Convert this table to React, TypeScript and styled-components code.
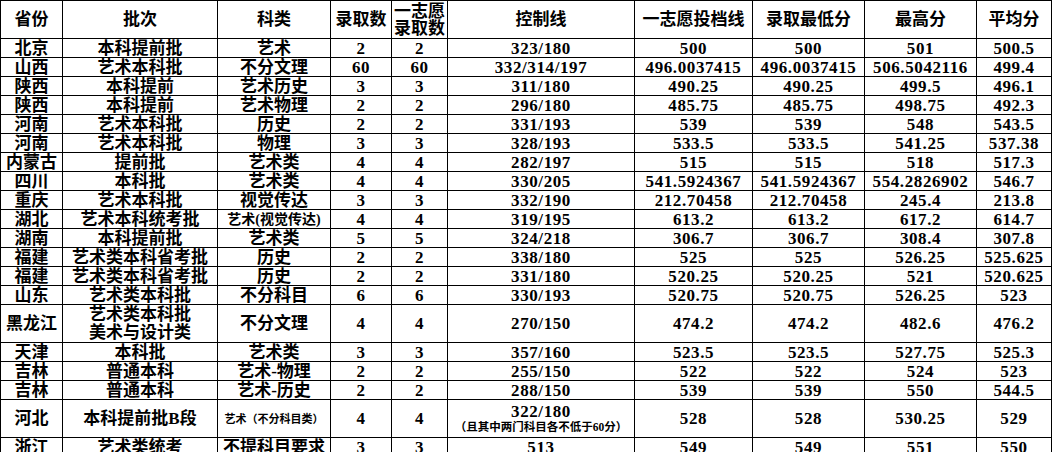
import styled, { createGlobalStyle } from "styled-components";

const GlobalStyle = createGlobalStyle`
  html, body {
    margin: 0;
    padding: 0;
    background: #ffffff;
  }
`;

const widths = [62, 155, 113, 61, 56, 187, 118, 112, 112, 75];

type Row = {
  cells: string[];
  tall?: boolean;
  small?: number; // font size of the 科类 cell when it is smaller
  note?: string; // smaller line under the control line
};

const rows: Row[] = [
  { cells: ["北京", "本科提前批", "艺术", "2", "2", "323/180", "500", "500", "501", "500.5"] },
  { cells: ["山西", "艺术本科批", "不分文理", "60", "60", "332/314/197", "496.0037415", "496.0037415", "506.5042116", "499.4"] },
  { cells: ["陕西", "本科提前", "艺术历史", "3", "3", "311/180", "490.25", "490.25", "499.5", "496.1"] },
  { cells: ["陕西", "本科提前", "艺术物理", "2", "2", "296/180", "485.75", "485.75", "498.75", "492.3"] },
  { cells: ["河南", "艺术本科批", "历史", "2", "2", "331/193", "539", "539", "548", "543.5"] },
  { cells: ["河南", "艺术本科批", "物理", "3", "3", "328/193", "533.5", "533.5", "541.25", "537.38"] },
  { cells: ["内蒙古", "提前批", "艺术类", "4", "4", "282/197", "515", "515", "518", "517.3"] },
  { cells: ["四川", "本科批", "艺术类", "4", "4", "330/205", "541.5924367", "541.5924367", "554.2826902", "546.7"] },
  { cells: ["重庆", "艺术本科批", "视觉传达", "3", "3", "332/190", "212.70458", "212.70458", "245.4", "213.8"] },
  { cells: ["湖北", "艺术本科统考批", "艺术(视觉传达)", "4", "4", "319/195", "613.2", "613.2", "617.2", "614.7"], small: 14 },
  { cells: ["湖南", "本科提前批", "艺术类", "5", "5", "324/218", "306.7", "306.7", "308.4", "307.8"] },
  { cells: ["福建", "艺术类本科省考批", "历史", "2", "2", "338/180", "525", "525", "526.25", "525.625"] },
  { cells: ["福建", "艺术类本科省考批", "历史", "2", "2", "331/180", "520.25", "520.25", "521", "520.625"] },
  { cells: ["山东", "艺术类本科批", "不分科目", "6", "6", "330/193", "520.75", "520.75", "526.25", "523"] },
  { cells: ["黑龙江", "艺术类本科批\n美术与设计类", "不分文理", "4", "4", "270/150", "474.2", "474.2", "482.6", "476.2"], tall: true },
  { cells: ["天津", "本科批", "艺术类", "3", "3", "357/160", "523.5", "523.5", "527.75", "525.3"] },
  { cells: ["吉林", "普通本科", "艺术-物理", "2", "2", "255/150", "522", "522", "524", "523"] },
  { cells: ["吉林", "普通本科", "艺术-历史", "2", "2", "288/150", "539", "539", "550", "544.5"] },
  { cells: ["河北", "本科提前批B段", "艺术（不分科目类）", "4", "4", "322/180", "528", "528", "530.25", "529"], tall: true, small: 11, note: "（且其中两门科目各不低于60分）" },
  { cells: ["浙江", "艺术类统考", "不提科目要求", "3", "3", "513", "549", "549", "551", "550"] },
];

const headers = ["省份", "批次", "科类", "录取数", "一志愿\n录取数", "控制线", "一志愿投档线", "录取最低分", "最高分", "平均分"];

const Table = styled.table`
  border-collapse: collapse;
  table-layout: fixed;
  width: 1052px;
  font-family: "Liberation Serif", "Noto Sans CJK SC", serif;
  font-weight: bold;
  font-size: 17px;
  color: #000;
`;

const HeadCell = styled.th<{ $tight?: boolean }>`
  height: 37px;
  padding: 0;
  border: 1px solid #000;
  font-weight: bold;
  text-align: center;
  vertical-align: middle;
  white-space: pre-line;
  line-height: ${(p) => (p.$tight ? "17px" : "20px")};
`;

const Cell = styled.td<{ $tall?: boolean; $size?: number; $num?: boolean }>`
  height: ${(p) => (p.$tall ? "37px" : "18px")};
  padding: 0;
  border: 1px solid #000;
  text-align: center;
  vertical-align: middle;
  white-space: pre-line;
  overflow: hidden;
  line-height: ${(p) => (p.$tall ? "18px" : "17px")};
  font-size: ${(p) => (p.$size ? `${p.$size}px` : "17px")};
  letter-spacing: ${(p) => (p.$num ? "0.6px" : "0")};
`;

const Note = styled.div`
  font-size: 11.5px;
  line-height: 13px;
  letter-spacing: 0;
`;

export default function App() {
  return (
    <>
      <GlobalStyle />
      <Table>
        <colgroup>
          {widths.map((w, i) => (
            <col key={i} style={{ width: w }} />
          ))}
        </colgroup>
        <thead>
          <tr>
            {headers.map((h, i) => (
              <HeadCell key={i} $tight={h.includes("\n")}>
                {h}
              </HeadCell>
            ))}
          </tr>
        </thead>
        <tbody>
          {rows.map((r, ri) => (
            <tr key={ri}>
              {r.cells.map((c, ci) => (
                <Cell
                  key={ci}
                  $tall={r.tall}
                  $num={ci >= 3}
                  $size={r.small && ci === 2 ? r.small : undefined}
                >
                  {c}
                  {ci === 5 && r.note ? <Note>{r.note}</Note> : null}
                </Cell>
              ))}
            </tr>
          ))}
        </tbody>
      </Table>
    </>
  );
}
